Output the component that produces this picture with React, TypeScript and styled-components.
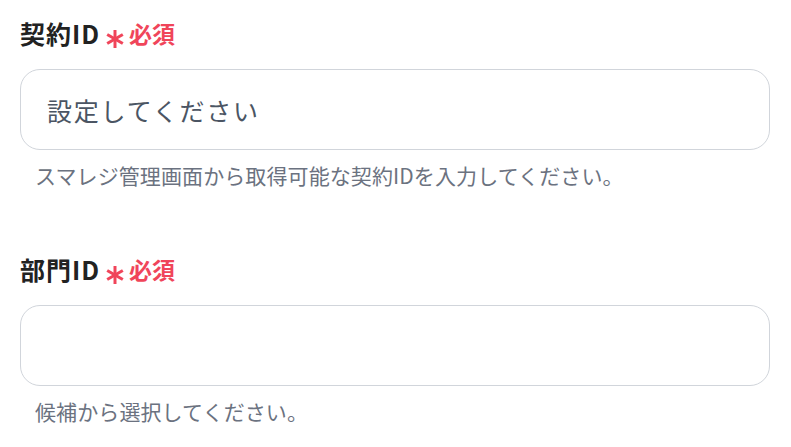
import React from "react";
import styled, { createGlobalStyle } from "styled-components";

const Global = createGlobalStyle`
  html, body { margin: 0; padding: 0; background: #ffffff; }
  body { font-family: "Noto Sans CJK JP", "Noto Sans", sans-serif; }
`;

const Page = styled.div`
  padding: 17px 21px 0 20px;
  display: flex;
  flex-direction: column;
  gap: 63px;
`;

const Field = styled.div`
  display: flex;
  flex-direction: column;
`;

const LabelRow = styled.div`
  display: flex;
  align-items: center;
  height: 32px;
`;

const LabelText = styled.span`
  font-size: 25px;
  font-weight: 700;
  color: #222222;
  line-height: 32px;
  letter-spacing: 1px;
`;

const Asterisk = styled.svg`
  width: 20px;
  height: 20px;
  margin-left: 5px;
  margin-top: 12px;
  flex: none;
`;

const Required = styled.span`
  font-size: 23px;
  font-weight: 700;
  color: #f0455a;
  margin-left: 4px;
  line-height: 32px;
`;

const InputBox = styled.div`
  margin-top: 20px;
  height: 81px;
  box-sizing: border-box;
  border: 1px solid #d1d5db;
  border-radius: 20px;
  display: flex;
  align-items: center;
  padding-left: 26px;
  background: #fff;
`;

const Placeholder = styled.span`
  font-size: 25px;
  letter-spacing: 1.8px;
  color: #4b5563;
`;

const Helper = styled.div`
  margin-top: 10px;
  padding-left: 15px;
  font-size: 21px;
  line-height: 30px;
  color: #6b7280;
  letter-spacing: 0.1px;
`;

const Star = () => (
  <Asterisk viewBox="0 0 20 20">
    <g stroke="#f0455a" strokeWidth="3" strokeLinecap="butt">
      <line x1="10" y1="1" x2="10" y2="19" />
      <line x1="2.2" y1="5.5" x2="17.8" y2="14.5" />
      <line x1="2.2" y1="14.5" x2="17.8" y2="5.5" />
    </g>
  </Asterisk>
);

type FieldProps = { label: string; placeholder?: string; help: string };

const FormField = ({ label, placeholder, help }: FieldProps) => (
  <Field>
    <LabelRow>
      <LabelText>{label}</LabelText>
      <Star />
      <Required>必須</Required>
    </LabelRow>
    <InputBox>{placeholder && <Placeholder>{placeholder}</Placeholder>}</InputBox>
    <Helper>{help}</Helper>
  </Field>
);

export default function App() {
  return (
    <>
      <Global />
      <Page>
        <FormField
          label="契約ID"
          placeholder="設定してください"
          help="スマレジ管理画面から取得可能な契約IDを入力してください。"
        />
        <FormField label="部門ID" help="候補から選択してください。" />
      </Page>
    </>
  );
}
